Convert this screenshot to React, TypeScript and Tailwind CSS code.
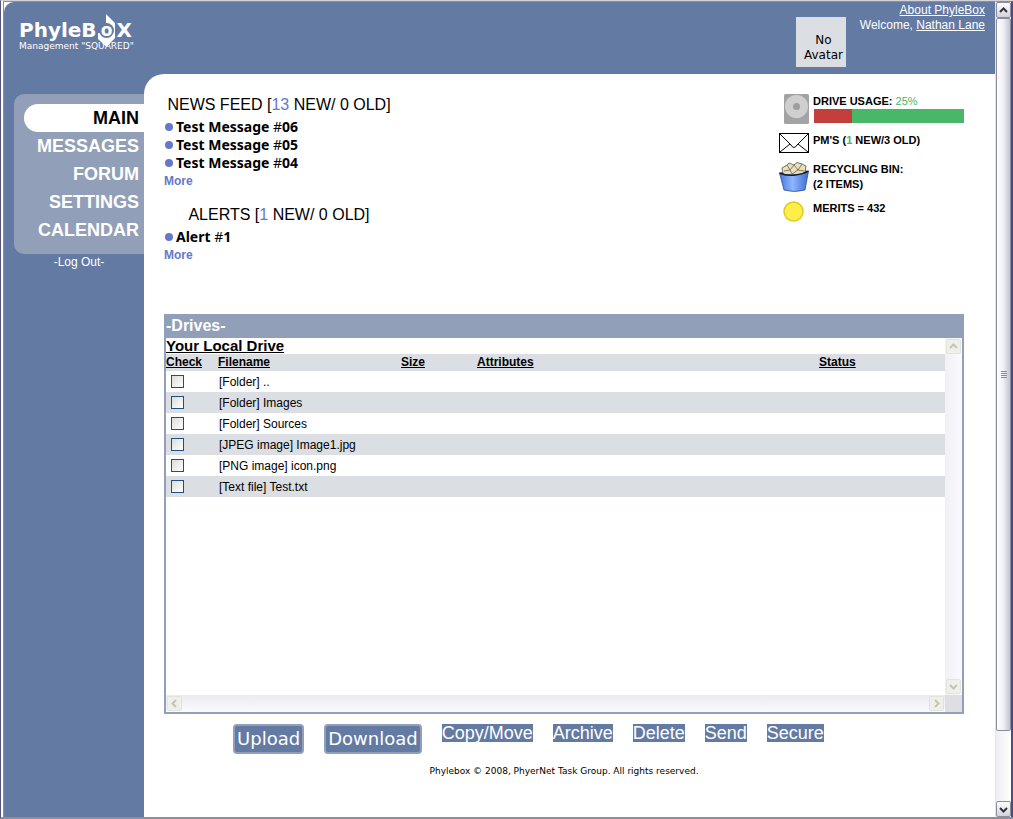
import React from "react";

const navItems = ["MAIN", "MESSAGES", "FORUM", "SETTINGS", "CALENDAR"];
const files = [
  "[Folder] ..",
  "[Folder] Images",
  "[Folder] Sources",
  "[JPEG image] Image1.jpg",
  "[PNG image] icon.png",
  "[Text file] Test.txt",
];
const actions = ["Copy/Move", "Archive", "Delete", "Send", "Secure"];

function Logo() {
  return (
    <div className="relative flex w-[140px] shrink-0 flex-col pt-[14px] pl-[15px]">
      <svg className="absolute top-3 left-[93px]" width="20" height="34" viewBox="0 0 20 34" aria-hidden="true">
        <path d="M9 0 L18 9 V24 L9.5 33 L1 25 V19 H9 Z" fill="#fff" />
        <circle cx="9.5" cy="16.5" r="7.5" fill="#637aa3" />
      </svg>
      <div className="relative flex h-7 items-center font-['DejaVu_Sans'] text-[20px] font-bold text-white">
        <span>PhyleB</span>
        <span className="flex w-5 shrink-0 justify-center text-[17px]">o</span>
        <span>X</span>
      </div>
      <div className="relative -mt-1 font-['DejaVu_Sans'] text-[9px] leading-3 whitespace-nowrap text-white">
        Management "SQUARED"
      </div>
    </div>
  );
}

function Chevron({ dir, color }: { dir: "up" | "down" | "left" | "right"; color: string }) {
  const paths = {
    up: "M1 6 L4.5 2.5 L8 6",
    down: "M1 3 L4.5 6.5 L8 3",
    left: "M6 1 L2.5 4.5 L6 8",
    right: "M3 1 L6.5 4.5 L3 8",
  };
  return (
    <svg width="9" height="9" viewBox="0 0 9 9" aria-hidden="true">
      <path d={paths[dir]} fill="none" stroke={color} strokeWidth="2" />
    </svg>
  );
}

function PaneArrow({ dir }: { dir: "up" | "down" | "left" | "right" }) {
  return (
    <button
      type="button"
      aria-label={"Scroll list " + dir}
      className="flex h-[15px] w-[15px] shrink-0 items-center justify-center rounded-xs border border-[#e4e3da] bg-[#f0f0ea]"
    >
      <Chevron dir={dir} color="#c5c4b8" />
    </button>
  );
}

function WindowArrow({ dir }: { dir: "up" | "down" }) {
  return (
    <button
      type="button"
      aria-label={"Scroll page " + dir}
      className="flex h-4 w-full shrink-0 items-center justify-center rounded-xs border border-[#8c8c9c] bg-linear-to-b from-white to-[#d2d2de]"
    >
      <Chevron dir={dir} color="#33333b" />
    </button>
  );
}

function WindowScrollbar() {
  return (
    <div className="flex w-[18px] shrink-0 flex-col border-t border-r-2 border-l border-t-[#8e8e98] border-r-[#4a4c80] border-l-[#e2e2ea] bg-linear-to-r from-[#eeeef4] to-white">
      <WindowArrow dir="up" />
      <div className="flex grow-[712] basis-0 items-center justify-center rounded-xs border border-[#8c8c9c] bg-linear-to-r from-white via-[#eeeef5] to-[#c4c4d6]">
        <div className="flex flex-col gap-px">
          <i className="h-px w-[6px] bg-[#8c8c9c]" />
          <i className="h-px w-[6px] bg-[#8c8c9c]" />
          <i className="h-px w-[6px] bg-[#8c8c9c]" />
          <i className="h-px w-[6px] bg-[#8c8c9c]" />
        </div>
      </div>
      <div className="grow-[70] basis-0" />
      <WindowArrow dir="down" />
    </div>
  );
}

function DiskIcon() {
  return (
    <svg width="25" height="30" viewBox="0 0 25 30" aria-hidden="true">
      <rect width="25" height="30" rx="1.5" fill="#a3a3a3" />
      <circle cx="12.5" cy="12.5" r="11.5" fill="#cfcfcf" />
      <circle cx="12.5" cy="12.5" r="3.5" fill="#9d9d9d" />
    </svg>
  );
}

function MailIcon() {
  return (
    <svg width="30" height="20" viewBox="0 0 30 20" aria-hidden="true">
      <rect x="0.5" y="0.5" width="29" height="19" fill="#fff" stroke="#000" />
      <path d="M1 1 L12 12 Q15 17 18 12 L29 1 M1 19 L11 11 M29 19 L19 11" fill="none" stroke="#000" />
    </svg>
  );
}

function BinIcon() {
  return (
    <svg width="30" height="30" viewBox="0 0 30 30" aria-hidden="true">
      <defs>
        <linearGradient id="bin" x1="0" x2="1">
          <stop offset="0" stopColor="#4479d8" />
          <stop offset="0.45" stopColor="#8fb6ff" />
          <stop offset="1" stopColor="#3d6ed0" />
        </linearGradient>
      </defs>
      <path d="M0.5 11 Q15 5 29.5 9 L28 14 H2 Z" fill="#26354f" />
      <path d="M4 12 L3 6 L8 3 L10 1 L15 3 L18 0.5 L23 2 L27 4 L26 10 L20 13 L8 13 Z" fill="#eadfbd" stroke="#555040" strokeWidth="0.8" />
      <path d="M8 3 L11 8 L15 3 L19 8 L23 2 M5 9 L11 8 L13 12 L19 8 L25 9" fill="none" stroke="#6b634b" strokeWidth="0.8" />
      <path d="M0.5 11 Q7 14 16 13 Q25 12 29.5 9 L26 28 Q15 31 5 28 Z" fill="url(#bin)" stroke="#2b4f9d" strokeWidth="0.8" />
      <path d="M0.5 11 Q7 14 16 13 Q25 12 29.5 9" fill="none" stroke="#141c2c" strokeWidth="1.4" />
    </svg>
  );
}

function More() {
  return (
    <a href="#more" className="block text-[12px] leading-[18px] font-bold text-[#6478cc]">
      More
    </a>
  );
}

function Feed({ title, count, items }: { title: string; count: number; items: [string, string][] }) {
  return (
    <section className="w-[230px]">
      <h2 className="text-center text-[16px] leading-[26px] whitespace-nowrap">
        {title} [<span className="text-[#6478cc]">{count}</span> NEW/ 0 OLD]
      </h2>
      <ul>
        {items.map(([name, number]) => (
          <li key={number} className="flex items-center gap-[3px] pl-px font-['Noto_Sans'] text-[14px] leading-[18px] font-bold">
            <i className="h-2 w-2 rounded-full bg-[#6478cc]" />
            <span>
              {name} <span className="font-normal">#</span>
              {number}
            </span>
          </li>
        ))}
      </ul>
      <More />
    </section>
  );
}

function Stats() {
  return (
    <aside className="grid w-[185px] grid-cols-[30px_1fr] gap-x-1 gap-y-[9px] self-start text-[11px] leading-[15px] font-bold">
      <div className="flex justify-end">
        <DiskIcon />
      </div>
      <div>
        <p>
          DRIVE USAGE: <span className="font-normal text-[#48b868]">25%</span>
        </p>
        <div className="ml-px flex h-[14px] bg-[#48b868]">
          <div className="w-1/4 bg-[#c43e3e]" />
        </div>
      </div>
      <MailIcon />
      <p>
        PM'S (<span className="text-[#48b868]">1</span> NEW/3 OLD)
      </p>
      <BinIcon />
      <p>
        RECYCLING BIN:
        <br />
        (2 ITEMS)
      </p>
      <svg width="30" height="21" viewBox="0 0 30 21" aria-hidden="true">
        <circle cx="14.5" cy="10.5" r="9.5" fill="#ffee48" stroke="#dccb20" strokeWidth="1.5" />
      </svg>
      <p>MERITS = 432</p>
    </aside>
  );
}

function Drives() {
  return (
    <section className="mt-[50px] border-2 border-[#929fb8]">
      <h2 className="h-[22px] bg-[#929fb8] text-[16px] leading-[19px] font-bold text-white">-Drives-</h2>
      <div className="flex">
        <div className="h-[357px] grow">
          <h3 className="text-[15px] leading-4 font-bold underline">Your Local Drive</h3>
          <table className="w-full table-fixed text-left text-[12px]">
            <thead>
              <tr className="h-[17px] bg-[#dbdee3] leading-[17px] underline">
                <th className="w-[52px]">Check</th>
                <th className="w-[183px]">Filename</th>
                <th className="w-[76px]">Size</th>
                <th>Attributes</th>
                <th className="w-[126px]">Status</th>
              </tr>
            </thead>
            <tbody>
              {files.map((file) => (
                <tr key={file} className="h-[21px] even:bg-[#dbdee3]">
                  <td className="pl-[5px]">
                    <input
                      type="checkbox"
                      id={file}
                      className="block h-[13px] w-[13px] appearance-none border border-[#1c5180] bg-linear-to-br from-[#dcdcd7] to-white"
                    />
                  </td>
                  <td className="pl-px">
                    <label htmlFor={file}>{file}</label>
                  </td>
                  <td />
                  <td />
                  <td />
                </tr>
              ))}
            </tbody>
          </table>
        </div>
        <div className="flex w-[17px] shrink-0 flex-col items-center justify-between bg-linear-to-r from-[#f0f0f5] to-[#fbfbff] py-px">
          <PaneArrow dir="up" />
          <PaneArrow dir="down" />
        </div>
      </div>
      <div className="flex">
        <div className="flex h-[17px] grow items-center justify-between bg-linear-to-b from-[#eaebef] to-[#fbfbff] px-px">
          <PaneArrow dir="left" />
          <PaneArrow dir="right" />
        </div>
        <div className="w-[17px] shrink-0 bg-[#dedfe5]" />
      </div>
    </section>
  );
}

function BigButton({ children }: { children: React.ReactNode }) {
  return (
    <button
      type="button"
      className="h-[30px] rounded-[4px] border-2 border-[#929fb8] bg-[#637aa3] px-[2px] font-['DejaVu_Sans'] text-[18px] leading-[26px] text-white"
    >
      {children}
    </button>
  );
}

export default function App() {
  return (
    <div className="flex min-h-screen border-t border-b-2 border-l border-t-[#d4d2d4] border-b-[#8e8e98] border-l-[#55557c] bg-white pl-[2px] font-['Liberation_Sans',sans-serif] text-black">
      <div className="flex grow flex-col border-t border-l border-[#8e8e98] bg-white">
        <div className="flex grow flex-col rounded-tl-[10px] bg-[#637aa3]">
          <header className="flex h-[72px] justify-between pr-[10px] text-[12px] leading-[15px] text-white">
            <Logo />
            <div className="flex gap-[9px]">
              <div className="mt-[15px] flex h-[50px] w-[50px] items-end justify-center bg-[#dbdee3] pb-1 pl-[5px] text-center font-['DejaVu_Sans'] text-black">
                No
                <br />
                Avatar
              </div>
              <div className="w-[130px] pt-px text-right">
                <a href="#about" className="underline">
                  About PhyleBox
                </a>
                <br />
                Welcome,{" "}
                <a href="#profile" className="underline">
                  Nathan Lane
                </a>
              </div>
            </div>
          </header>
          <div className="flex grow">
            <div className="w-[140px] shrink-0 pt-5 pl-[10px]">
              <nav className="rounded-l-[10px] bg-[#929fb8] py-[10px] pl-[10px]">
                {navItems.map((item, i) => (
                  <a
                    key={item}
                    href={"#" + item.toLowerCase()}
                    className={
                      "block rounded-l-full pt-px pr-[5px] text-right text-[18px] leading-[27px] font-bold " +
                      (i === 0 ? "bg-white text-black" : "text-white")
                    }
                  >
                    {item}
                  </a>
                ))}
              </nav>
              <a href="#logout" className="block text-center text-[12px] leading-4 text-white">
                -Log Out-
              </a>
            </div>
            <main className="grow rounded-tl-[20px] bg-white pt-5 pr-[31px] pl-5">
              <div className="flex justify-between">
                <div className="-mt-[2px] flex flex-col gap-3">
                  <Feed
                    title="NEWS FEED"
                    count={13}
                    items={[
                      ["Test Message", "06"],
                      ["Test Message", "05"],
                      ["Test Message", "04"],
                    ]}
                  />
                  <Feed title="ALERTS" count={1} items={[["Alert", "1"]]} />
                </div>
                <Stats />
              </div>
              <Drives />
              <div className="mt-[10px] flex items-start justify-center gap-5 pr-[71px]">
                <BigButton>Upload</BigButton>
                <BigButton>Download</BigButton>
                {actions.map((a) => (
                  <button key={a} type="button" className="bg-[#637aa3] text-[18px] leading-[18px] text-white">
                    {a}
                  </button>
                ))}
              </div>
              <footer className="mt-[10px] text-center font-['DejaVu_Sans'] text-[9px] leading-[14px]">
                Phylebox © 2008, PhyerNet Task Group. All rights reserved.
              </footer>
            </main>
          </div>
        </div>
      </div>
      <WindowScrollbar />
    </div>
  );
}
